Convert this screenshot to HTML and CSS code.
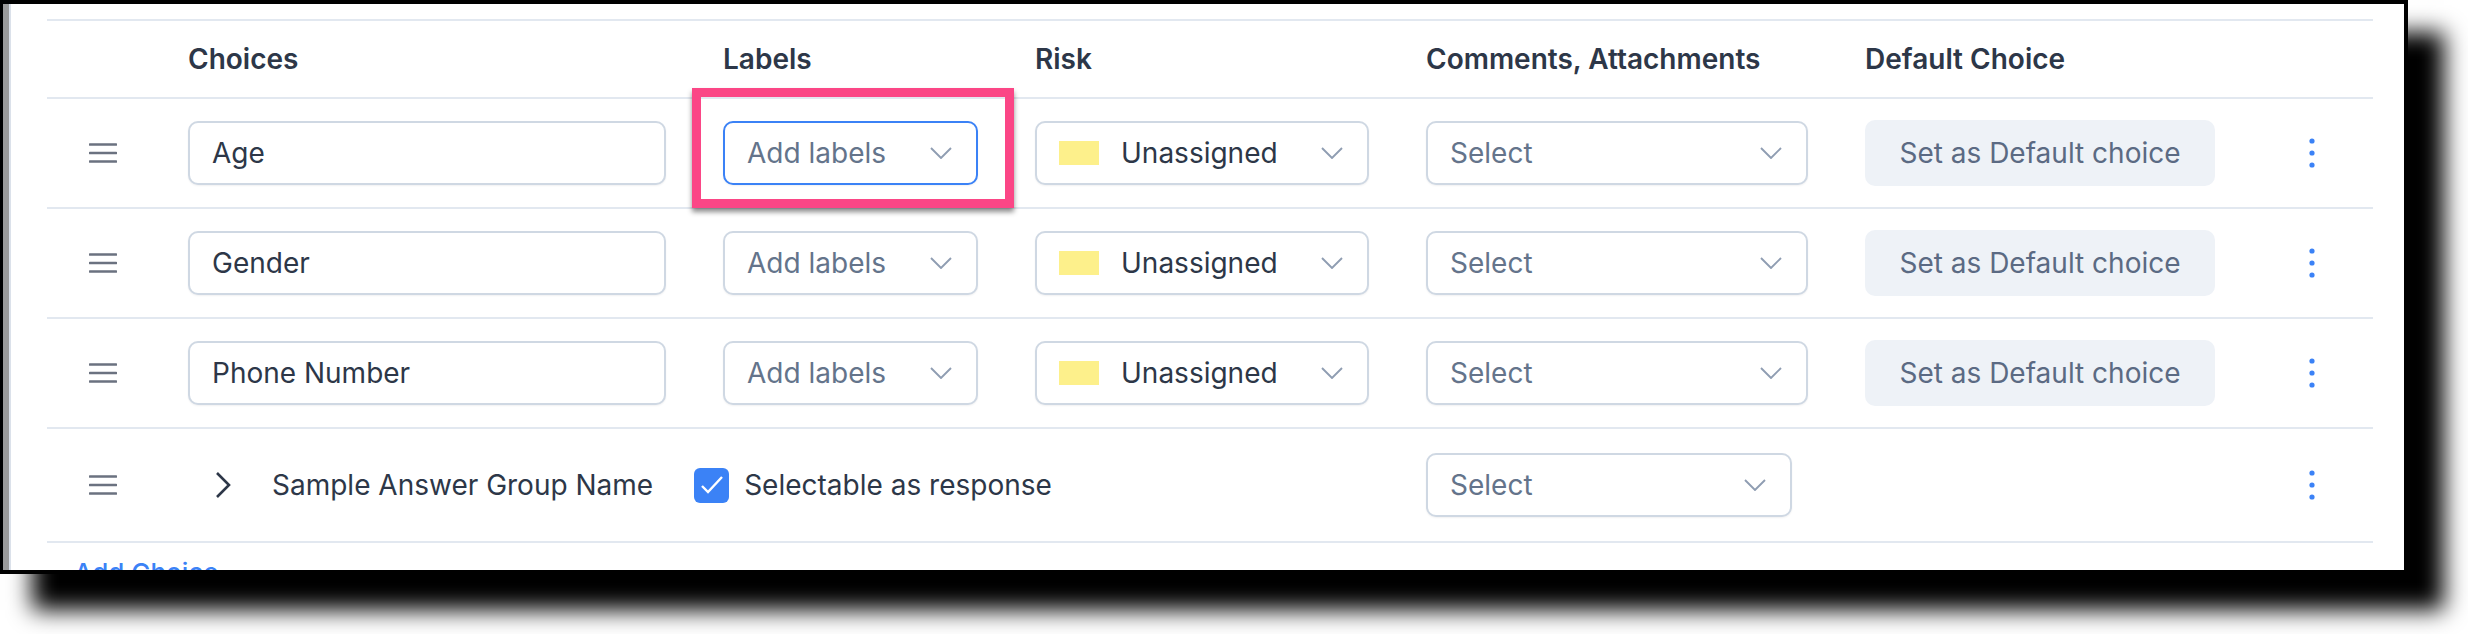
FILE: index.html
```html
<!DOCTYPE html>
<html lang="en">
<head>
    <meta charset="UTF-8">
    <meta name="viewport" content="width=device-width, initial-scale=1.0">
    <title>Choices</title>
    <link rel="stylesheet" href="styles.css">
</head>
<body>

    <div class="frame">
        <div class="panel">
            <div class="choices">

                <div class="row head">
                    <div></div>
                    <div class="th">Choices</div>
                    <div class="th">Labels</div>
                    <div class="th">Risk</div>
                    <div class="th">Comments, Attachments</div>
                    <div class="th">Default Choice</div>
                    <div></div>
                </div>

                <div class="row">
                    <span class="drag"><svg width="28" height="20" viewBox="0 0 28 20"><path d="M1 1.5h26M1 10h26M1 18.5h26"/></svg></span>
                    <div class="field">Age</div>
                    <div class="labels-cell">
                        <div class="select focus">Add labels <svg class="chev" viewBox="0 0 22 12"><path d="M1 1l10 10 10-10"/></svg></div>
                        <span class="highlight"></span>
                    </div>
                    <div class="select risk"><span class="risk-val"><span class="swatch"></span>Unassigned</span> <svg class="chev" viewBox="0 0 22 12"><path d="M1 1l10 10 10-10"/></svg></div>
                    <div class="select">Select <svg class="chev" viewBox="0 0 22 12"><path d="M1 1l10 10 10-10"/></svg></div>
                    <div class="default-btn">Set as Default choice</div>
                    <span class="kebab"><svg width="6" height="30" viewBox="0 0 6 30"><circle cx="3" cy="3" r="2.6"/><circle cx="3" cy="15" r="2.6"/><circle cx="3" cy="27" r="2.6"/></svg></span>
                </div>

                <div class="row">
                    <span class="drag"><svg width="28" height="20" viewBox="0 0 28 20"><path d="M1 1.5h26M1 10h26M1 18.5h26"/></svg></span>
                    <div class="field">Gender</div>
                    <div class="select">Add labels <svg class="chev" viewBox="0 0 22 12"><path d="M1 1l10 10 10-10"/></svg></div>
                    <div class="select risk"><span class="risk-val"><span class="swatch"></span>Unassigned</span> <svg class="chev" viewBox="0 0 22 12"><path d="M1 1l10 10 10-10"/></svg></div>
                    <div class="select">Select <svg class="chev" viewBox="0 0 22 12"><path d="M1 1l10 10 10-10"/></svg></div>
                    <div class="default-btn">Set as Default choice</div>
                    <span class="kebab"><svg width="6" height="30" viewBox="0 0 6 30"><circle cx="3" cy="3" r="2.6"/><circle cx="3" cy="15" r="2.6"/><circle cx="3" cy="27" r="2.6"/></svg></span>
                </div>

                <div class="row">
                    <span class="drag"><svg width="28" height="20" viewBox="0 0 28 20"><path d="M1 1.5h26M1 10h26M1 18.5h26"/></svg></span>
                    <div class="field">Phone Number</div>
                    <div class="select">Add labels <svg class="chev" viewBox="0 0 22 12"><path d="M1 1l10 10 10-10"/></svg></div>
                    <div class="select risk"><span class="risk-val"><span class="swatch"></span>Unassigned</span> <svg class="chev" viewBox="0 0 22 12"><path d="M1 1l10 10 10-10"/></svg></div>
                    <div class="select">Select <svg class="chev" viewBox="0 0 22 12"><path d="M1 1l10 10 10-10"/></svg></div>
                    <div class="default-btn">Set as Default choice</div>
                    <span class="kebab"><svg width="6" height="30" viewBox="0 0 6 30"><circle cx="3" cy="3" r="2.6"/><circle cx="3" cy="15" r="2.6"/><circle cx="3" cy="27" r="2.6"/></svg></span>
                </div>

                <div class="row group">
                    <span class="drag"><svg width="28" height="20" viewBox="0 0 28 20"><path d="M1 1.5h26M1 10h26M1 18.5h26"/></svg></span>
                    <div class="group-name">
                        <svg class="expand" width="18" height="28" viewBox="0 0 18 28"><path d="M3 2l12 12-12 12"/></svg>
                        <span class="group-title">Sample Answer Group Name</span>
                        <span class="checkbox"><svg width="35" height="35" viewBox="0 0 35 35"><path d="M8 18l6 6 14-15"/></svg></span>
                        <span>Selectable as response</span>
                    </div>
                    <div class="select short">Select <svg class="chev" viewBox="0 0 22 12"><path d="M1 1l10 10 10-10"/></svg></div>
                    <div></div>
                    <span class="kebab"><svg width="6" height="30" viewBox="0 0 6 30"><circle cx="3" cy="3" r="2.6"/><circle cx="3" cy="15" r="2.6"/><circle cx="3" cy="27" r="2.6"/></svg></span>
                </div>

            </div>
            <div class="add-choice">Add Choice</div>
        </div>
    </div>

</body>
</html>
```

FILE: styles.css
```css
body {
    margin: 0;
    padding-bottom: 60px;
    background-color: #fff;
    font-family: Inter, "Noto Sans", sans-serif;
    color: #2d3748;
}
.frame {
    width: 2408px;
    height: 574px;
    box-sizing: border-box;
    border: 4px solid #000;
    border-left-width: 3px;
    background-color: #fff;
    box-shadow: 34px 34px 22px 2px #000;
}
.panel {
    height: 100%;
    box-sizing: border-box;
    border-left: 6px solid #9b9b9b;
    box-shadow: inset 2px 0 0 #dbe1ea;
    padding: 15px 31px 0 38px;
    overflow: hidden;
}
.choices {
    border-top: 2px solid #e2e8f0;
}
.row {
    display: grid;
    grid-template-columns: 42px 478px 255px 334px 382px 350px 1fr;
    column-gap: 57px;
    align-items: center;
    height: 110px;
    box-sizing: border-box;
    padding-left: 42px;
    border-bottom: 2px solid #e2e8f0;
    font-size: 28px;
}
.row.head {
    height: 78px;
}
.row.group {
    height: 114px;
}
.th {
    font-size: 28px;
    font-weight: 600;
    color: #2d3748;
}
.drag {
    display: flex;
}
.drag svg {
    stroke: #6b7280;
    stroke-width: 2.6;
    stroke-linecap: round;
    fill: none;
}
.field,
.select {
    display: flex;
    align-items: center;
    height: 64px;
    box-sizing: border-box;
    padding: 0 22px;
    border: 2px solid #cfd8e3;
    border-radius: 10px;
    background-color: #fff;
    box-shadow: 0 1px 2px rgba(15, 23, 42, 0.06);
}
.field {
    color: #2d3748;
}
.select {
    justify-content: space-between;
    padding-right: 24px;
    color: #64748b;
}
.select.focus {
    border-color: #3b82f6;
}
.select.short {
    width: 366px;
}
.chev {
    width: 22px;
    height: 12px;
    stroke: #8f9db2;
    stroke-width: 1.9;
    fill: none;
}
.labels-cell {
    position: relative;
}
.highlight {
    position: absolute;
    left: -31px;
    top: -33px;
    width: 322px;
    height: 120px;
    box-sizing: border-box;
    border: 9px solid #fb4686;
    box-shadow: 0 4px 5px rgba(0, 0, 0, 0.45);
    z-index: 2;
}
.risk-val {
    display: flex;
    align-items: center;
    gap: 22px;
    color: #2d3748;
}
.swatch {
    width: 40px;
    height: 24px;
    background-color: #fdf08b;
}
.default-btn {
    display: flex;
    align-items: center;
    justify-content: center;
    height: 66px;
    border-radius: 10px;
    background-color: #eef2f7;
    color: #5b6a83;
}
.kebab {
    display: flex;
    padding-left: 37px;
}
.kebab svg {
    fill: #3b82f6;
}
.group-name {
    grid-column: 2 / span 3;
    display: flex;
    align-items: center;
    color: #2d3748;
}
.expand {
    margin-left: 26px;
    stroke: #2d3748;
    stroke-width: 2.6;
    fill: none;
}
.group-title {
    margin-left: 40px;
    margin-right: 41px;
}
.checkbox {
    display: flex;
    width: 35px;
    height: 35px;
    margin-right: 15px;
    border-radius: 6px;
    background-color: #3b82f6;
}
.checkbox svg {
    stroke: #fff;
    stroke-width: 2.4;
    fill: none;
}
.add-choice {
    padding: 14px 0 0 27px;
    font-size: 26px;
    font-weight: 500;
    color: #3b82f6;
}
```
